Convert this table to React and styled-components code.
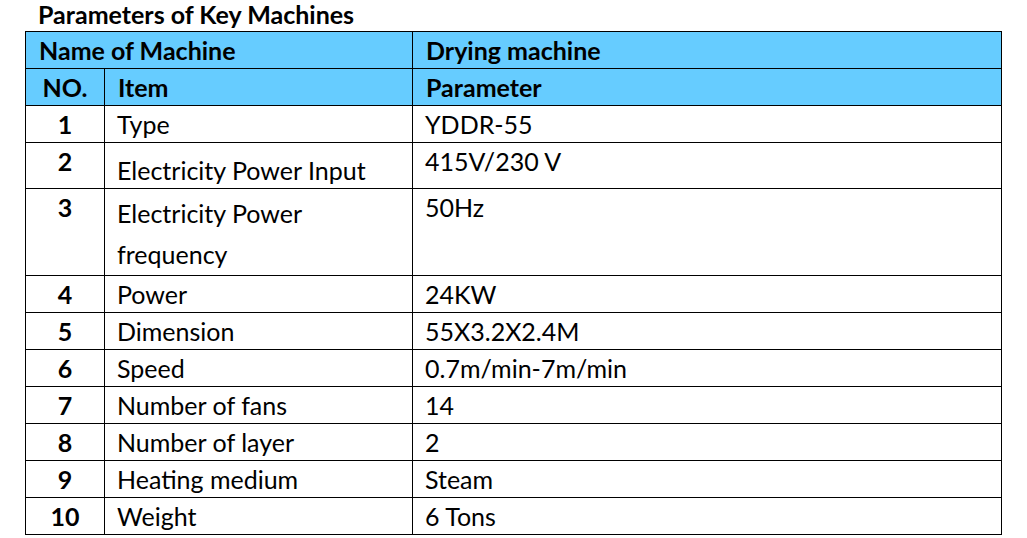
import React from 'react';
import styled, { createGlobalStyle } from 'styled-components';

const GlobalStyle = createGlobalStyle`
    body {
        margin : 0;
        background : #ffffff;
        font-family : Lato, "Open Sans", sans-serif;
        color : #000000;
    }
`

const Page = styled.div`
    width : 1027px;
    height : 538px;
    overflow : hidden;
`

const Title = styled.h2`
    margin : 0;
    padding-left : 38px;
    height : 31px;
    font-size : 25px;
    line-height : 28px;
    font-weight : bold;
`

const Table = styled.table`
    margin-left : 25px;
    width : 977px;
    border-collapse : collapse;
    table-layout : fixed;
    font-size : 25px;
`

const Th = styled.th`
    background-color : #66ccff;
    border : 1px solid #000000;
    height : 36px;
    padding : 0 0 0 ${(p) => (p.center ? '0' : '13px')};
    text-align : ${(p) => (p.center ? 'center' : 'left')};
    line-height : 36px;
    font-weight : bold;
`

const Td = styled.td`
    border : 1px solid #000000;
    height : 36px;
    padding : ${(p) => p.pad || '0'} 0 0 ${(p) => (p.center ? '0' : '12px')};
    text-align : ${(p) => (p.center ? 'center' : 'left')};
    vertical-align : top;
    line-height : ${(p) => p.lh || '36px'};
    font-weight : ${(p) => (p.bold ? 'bold' : 'normal')};
`

const rows = [
    { no: 1, item: ['Type'], value: 'YDDR-55' },
    { no: 2, item: ['Electricity Power Input'], value: '415V/230 V', pad: '9px' },
    { no: 3, item: ['Electricity Power', 'frequency'], value: '50Hz', pad: '4px', lh: '41px' },
    { no: 4, item: ['Power'], value: '24KW' },
    { no: 5, item: ['Dimension'], value: '55X3.2X2.4M' },
    { no: 6, item: ['Speed'], value: '0.7m/min-7m/min' },
    { no: 7, item: ['Number of fans'], value: '14' },
    { no: 8, item: ['Number of layer'], value: '2' },
    { no: 9, item: ['Heating medium'], value: 'Steam' },
    { no: 10, item: ['Weight'], value: '6 Tons' },
]

export default function App() {
    return (
        <>
            <GlobalStyle />
            <Page>
                <Title>Parameters of Key Machines</Title>
                <Table>
                    <colgroup>
                        <col style={{ width: '79px' }} />
                        <col style={{ width: '308px' }} />
                        <col />
                    </colgroup>
                    <thead>
                        <tr>
                            <Th colSpan={2}>Name of Machine</Th>
                            <Th>Drying machine</Th>
                        </tr>
                        <tr>
                            <Th center>NO.</Th>
                            <Th>Item</Th>
                            <Th>Parameter</Th>
                        </tr>
                    </thead>
                    <tbody>
                        {rows.map((row) => (
                            <tr key={row.no}>
                                <Td center bold>{row.no}</Td>
                                <Td pad={row.pad} lh={row.lh}>
                                    {row.item.map((line, i) => (
                                        <React.Fragment key={i}>
                                            {i > 0 && <br />}
                                            {line}
                                        </React.Fragment>
                                    ))}
                                </Td>
                                <Td>{row.value}</Td>
                            </tr>
                        ))}
                    </tbody>
                </Table>
            </Page>
        </>
    )
}
